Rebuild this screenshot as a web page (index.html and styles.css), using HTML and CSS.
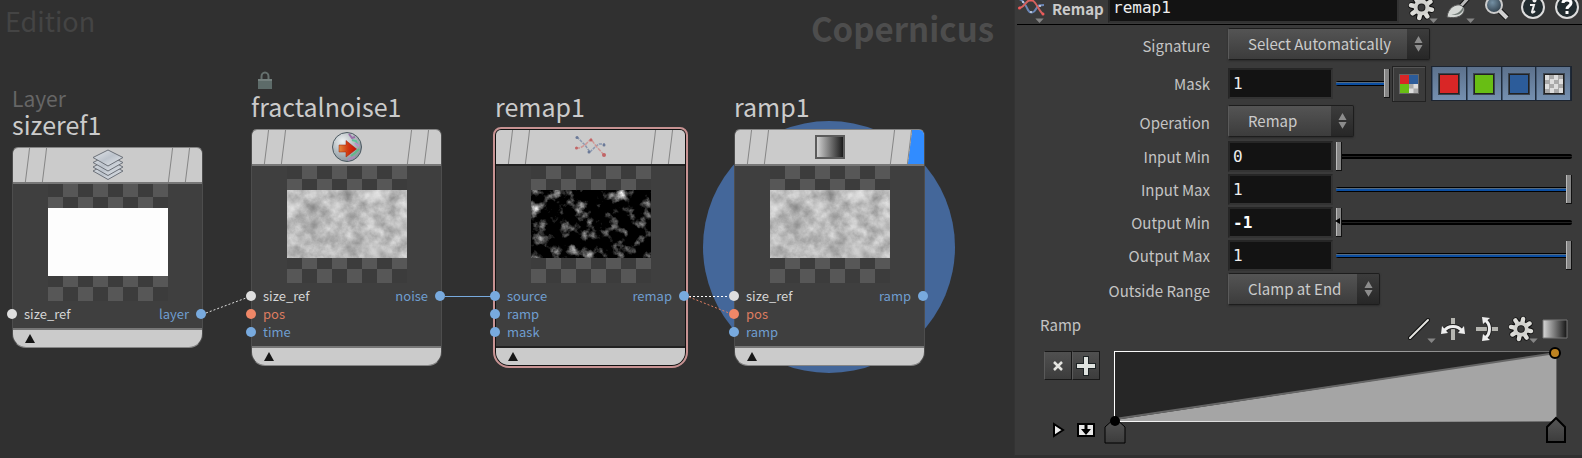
FILE: index.html
```html
<!DOCTYPE html>
<html lang="en">
<head>
<meta charset="utf-8">
<title>Copernicus network</title>
<link rel="stylesheet" href="styles.css">
</head>
<body>
<svg class="defs" width="0" height="0" aria-hidden="true">
  <defs>
    <linearGradient id="steel" x1="0" y1="0" x2="1" y2="1"><stop offset="0" stop-color="#e3e6ea"/><stop offset=".5" stop-color="#bcc3cc"/><stop offset="1" stop-color="#e6e9ed"/></linearGradient>
    <linearGradient id="fade"><stop offset="0" stop-color="#d8d8d8"/><stop offset="1" stop-color="#141414"/></linearGradient>
    <linearGradient id="arrowfill"><stop offset="0" stop-color="#e38a3c"/><stop offset=".5" stop-color="#d03a12"/><stop offset="1" stop-color="#c80a06"/></linearGradient>
    <linearGradient id="tagfill" x1="0" y1="0" x2="0" y2="1"><stop offset="0" stop-color="#565656"/><stop offset="1" stop-color="#3c3c3c"/></linearGradient>
    <radialGradient id="ball" cx=".35" cy=".3" r=".8"><stop offset="0" stop-color="#eef1f2"/><stop offset="1" stop-color="#7d8a92"/></radialGradient>
    <radialGradient id="lens" cx=".4" cy=".35" r=".7"><stop offset="0" stop-color="#7490a4"/><stop offset="1" stop-color="#2c3a45"/></radialGradient>
    <filter id="soft" x="-50%" y="-50%" width="200%" height="200%"><feGaussianBlur stdDeviation="3"/></filter>
    <filter id="cloud" x="0" y="0" width="100%" height="100%" color-interpolation-filters="sRGB">
      <feTurbulence type="fractalNoise" baseFrequency=".09" numOctaves="4" seed="7"/>
      <feColorMatrix values=".4 0 0 0 .53  .4 0 0 0 .53  .4 0 0 0 .53  0 0 0 0 1"/>
    </filter>
    <filter id="sparks" x="0" y="0" width="100%" height="100%" color-interpolation-filters="sRGB">
      <feTurbulence type="fractalNoise" baseFrequency=".09" numOctaves="4" seed="7" result="n"/>
      <feColorMatrix in="n" values="1 0 0 0 0  1 0 0 0 0  1 0 0 0 0  0 0 0 0 1" result="g"/>
      <feGaussianBlur in="SourceGraphic" stdDeviation="2" result="b"/>
      <feComposite in="g" in2="b" operator="arithmetic" k1="0" k2="1.8" k3=".8" k4="-1"/>
      <feColorMatrix values="1 0 0 0 0  0 1 0 0 0  0 0 1 0 0  0 0 0 0 1"/>
    </filter>
    <symbol id="updown" viewBox="0 0 10 18"><path fill="#8c8c8c" d="M5 0 9.500 8H.5zM.5 10h9L5 17.500z"/></symbol>
    <symbol id="drop" viewBox="0 0 10 6"><path fill="#858585" d="M0 .5h10L5 6z"/></symbol>
    <symbol id="gear" viewBox="-12 -12 24 24">
      <g stroke="#111" stroke-width="6" stroke-linecap="round"><path d="M0-9V9M-9 0H9M-6.400-6.400 6.400 6.400M-6.400 6.400 6.400-6.400" transform="rotate(12)"/></g>
      <circle r="8" fill="#111"/>
      <g stroke="#dcdcd8" stroke-width="4" stroke-linecap="round"><path d="M0-9.500V-5M0 5v4.500M-9.500 0H-5M5 0h4.500M-6.700-6.700-4-4M4 4l2.700 2.700M-6.700 6.700-4 4M4-4l2.700-2.700" transform="rotate(12)"/></g>
      <circle r="5" fill="#3a3a3a" stroke="#d2d2ce" stroke-width="4"/>
      <circle r="3" fill="#3a3a3a" stroke="#222" stroke-width="1"/>
    </symbol>
    <symbol id="helix" viewBox="0 0 28 20">
      <g fill="none" stroke-width="2"><path stroke="#6b86b5" d="M1 2c5 1 7 7 9 11s6 3 8-1 3-4 8-4"/><path stroke="#d5625f" d="M1 11c6 0 6-8 12-8 5 0 7 10 12 14"/></g>
      <g fill="#cfd8ea"><circle cx="5" cy="5" r="1"/><circle cx="13" cy="15" r="1"/><circle cx="22" cy="9" r="1"/></g>
      <g fill="#f05a5a"><circle cx="1.500" cy="11" r="1.500"/><circle cx="13" cy="3" r="1.500"/><circle cx="25" cy="17" r="1.500"/></g>
    </symbol>
  </defs>
</svg>

<div class="app">
  <main class="network">
    <p class="edition">Edition</p>
    <h1 class="context">Copernicus</h1>
    <div class="halo"></div>

    <section class="node node-sizeref">
      <p class="kind">Layer</p>
      <h2 class="name">sizeref1</h2>
      <div class="card">
        <header class="cap"><i class="slot"></i>
          <svg width="32" height="32" viewBox="0 0 32 32" fill="url(#steel)" stroke="#6b7078"><path d="M1 22 16 14l15 8-15 8.500z"/><path d="M1 18 16 10l15 8-15 8.500z"/><path d="M1 13.500 16 6l15 7.500-15 8.500z"/><path d="M1 8.500 16 1l15 7.500L16 17z"/></svg>
          <i class="slot"></i></header>
        <div class="preview"><div class="image white"></div></div>
        <div class="ports">
          <ul class="ins"><li class="any">size_ref</li></ul>
          <ul class="outs"><li>layer</li></ul>
        </div>
        <footer class="foot"><svg width="10" height="9" viewBox="0 0 10 9"><path d="M5 0l5 9H0z" fill="#161616"/></svg></footer>
      </div>
    </section>

    <section class="node node-fractal">
      <svg class="lock" width="14" height="18" viewBox="0 0 14 18"><path d="M3.500 9V5.500a3.500 4 0 0 1 7 0V9" fill="none" stroke="#65706e" stroke-width="2"/><path d="M0 8h14v10H0z" fill="#5d6b69"/><path d="M0 8h14v2H0z" fill="#74807e"/></svg>
      <h2 class="name">fractalnoise1</h2>
      <div class="card">
        <header class="cap"><i class="slot"></i>
          <svg width="32" height="32" viewBox="0 0 32 32"><circle cx="16" cy="16" r="14.500" fill="url(#ball)" stroke="#4c5961"/><g stroke-width="2" fill="none"><path d="M18 3l3 4 3-1" stroke="#9a6fa8"/><path d="M21 9l4 1 2 5" stroke="#5fc29a"/><path d="M24 12l4 3" stroke="#c08bc9"/><path d="M20 25l4-3 4-4" stroke="#61b88b"/><path d="M17 29l4-2 3-1" stroke="#a98ab8"/></g><path d="M8 14h7V9.500L25.500 18 15 26v-5H8z" fill="url(#arrowfill)" stroke="#a01c08" stroke-width=".5"/></svg>
          <i class="slot"></i></header>
        <div class="preview"><svg class="image" viewBox="0 0 120 68" preserveAspectRatio="none"><rect width="120" height="68" filter="url(#cloud)"/><g filter="url(#soft)"><g fill="#555" opacity=".6"><circle cx="27" cy="18" r="5"/><circle cx="27" cy="34" r="4"/><circle cx="60" cy="5" r="4"/><circle cx="64" cy="28" r="3"/><circle cx="64" cy="61" r="4"/><circle cx="94" cy="64" r="4"/><circle cx="2" cy="35" r="3"/></g><g fill="#eee" opacity=".7"><circle cx="4" cy="17" r="5"/><circle cx="28" cy="3" r="4"/><circle cx="88" cy="5" r="6"/><circle cx="87" cy="61" r="6"/><circle cx="112" cy="36" r="4"/><circle cx="50" cy="17" r="5"/></g></g></svg></div>
        <div class="ports">
          <ul class="ins"><li class="any">size_ref</li><li class="vec">pos</li><li>time</li></ul>
          <ul class="outs"><li>noise</li></ul>
        </div>
        <footer class="foot"><svg width="10" height="9" viewBox="0 0 10 9"><path d="M5 0l5 9H0z" fill="#161616"/></svg></footer>
      </div>
    </section>

    <section class="node node-remap">
      <h2 class="name">remap1</h2>
      <div class="card selected">
        <header class="cap"><i class="slot"></i>
          <svg width="32" height="24" viewBox="0 0 32 24" fill="none" stroke-width="1.500" opacity=".8"><path d="M2 2l8 8 5 7 6-6 3-2h6" stroke="#7b8ba9" stroke-dasharray="3 1"/><path d="M1 13h4l5-3 6-6 5 7 8 9" stroke="#d08a88" stroke-dasharray="4 1"/><g fill="#bf4a4c" stroke="none"><circle cx="1.500" cy="13" r="1.500"/><circle cx="16" cy="5" r="1.500"/><circle cx="29" cy="20" r="2"/></g><g fill="#53658a" stroke="none"><circle cx="2" cy="2.500" r="1.500"/><circle cx="14" cy="17" r="1.500"/><circle cx="29" cy="10" r="1.500"/></g></svg>
          <i class="slot"></i></header>
        <div class="preview"><svg class="image" viewBox="0 0 120 68" preserveAspectRatio="none"><g filter="url(#sparks)"><rect width="120" height="68" fill="#000"/><g fill="#bbb"><circle cx="4" cy="17" r="6"/><circle cx="28" cy="2" r="5"/><circle cx="50" cy="17" r="6"/><circle cx="89" cy="5" r="6"/><circle cx="13" cy="32" r="5"/><circle cx="12" cy="48" r="5"/><circle cx="34" cy="36" r="4"/><circle cx="53" cy="46" r="5"/><circle cx="73" cy="45" r="5"/><circle cx="111" cy="36" r="6"/><circle cx="87" cy="61" r="7"/><circle cx="5" cy="65" r="5"/><circle cx="56" cy="65" r="5"/><circle cx="102" cy="22" r="4"/><circle cx="42" cy="6" r="3"/><circle cx="4" cy="3" r="3"/><circle cx="17" cy="9" r="3"/><circle cx="34" cy="46" r="3"/><circle cx="42" cy="60" r="4"/><circle cx="25" cy="63" r="4"/><circle cx="60" cy="32" r="3"/><circle cx="70" cy="61" r="3"/></g></g></svg></div>
        <div class="ports">
          <ul class="ins"><li>source</li><li>ramp</li><li>mask</li></ul>
          <ul class="outs"><li>remap</li></ul>
        </div>
        <footer class="foot"><svg width="10" height="9" viewBox="0 0 10 9"><path d="M5 0l5 9H0z" fill="#161616"/></svg></footer>
      </div>
    </section>

    <section class="node node-ramp">
      <h2 class="name">ramp1</h2>
      <div class="card">
        <header class="cap display"><i class="slot"></i>
          <svg width="30" height="24" viewBox="0 0 30 24"><path d="M1 1h28v22H1z" fill="url(#fade)" stroke="#5c5c5c" stroke-width="2"/></svg>
          <i class="slot"></i></header>
        <div class="preview"><svg class="image" viewBox="0 0 120 68" preserveAspectRatio="none"><rect width="120" height="68" filter="url(#cloud)"/><g filter="url(#soft)"><g fill="#555" opacity=".6"><circle cx="27" cy="18" r="5"/><circle cx="27" cy="34" r="4"/><circle cx="60" cy="5" r="4"/><circle cx="64" cy="28" r="3"/><circle cx="64" cy="61" r="4"/><circle cx="94" cy="64" r="4"/><circle cx="2" cy="35" r="3"/></g><g fill="#eee" opacity=".7"><circle cx="4" cy="17" r="5"/><circle cx="28" cy="3" r="4"/><circle cx="88" cy="5" r="6"/><circle cx="87" cy="61" r="6"/><circle cx="112" cy="36" r="4"/><circle cx="50" cy="17" r="5"/></g></g></svg></div>
        <div class="ports">
          <ul class="ins"><li class="any">size_ref</li><li class="vec">pos</li><li>ramp</li></ul>
          <ul class="outs"><li>ramp</li></ul>
        </div>
        <footer class="foot"><svg width="10" height="9" viewBox="0 0 10 9"><path d="M5 0l5 9H0z" fill="#161616"/></svg></footer>
      </div>
    </section>

    <svg class="wires" width="1010" height="440" viewBox="0 0 1010 440" fill="none" aria-hidden="true">
      <path d="M206 313l40-15" stroke="#ddd" stroke-dasharray="2 2"/>
      <path d="M445 296.500h46" stroke="#78aade"/>
      <path d="M689 296.500h40" stroke="#fff" stroke-dasharray="2 2"/>
      <path d="M689 297l40 16" stroke="#e07f62" stroke-dasharray="2 2"/>
    </svg>
  </main>

  <aside class="inspector">
    <header class="bar">
      <button class="tool type" aria-label="Node type"><svg width="28" height="20"><use href="#helix"/></svg><svg class="more" width="9" height="5"><use href="#drop"/></svg></button>
      <label class="bar-label" for="node-name">Remap</label>
      <input class="field bar-field" id="node-name" value="remap1">
      <button class="tool" aria-label="Settings"><svg width="27" height="27"><use href="#gear"/></svg><svg class="more" width="9" height="5"><use href="#drop"/></svg></button>
      <button class="tool" aria-label="Brush"><svg width="26" height="26" viewBox="0 0 26 26"><path d="M15 12 25 1" stroke="#111" stroke-width="5"/><path d="M15 12 25 1" stroke="#bbb" stroke-width="3"/><path d="M1 23c1-9 8-13 13-12 6 2 5 8 0 11-4 2-8 2-13 1z" fill="#d5d8d5" stroke="#555"/><path d="M5 20c4 1 9-1 12-7 2 6-7 10-12 7z" fill="#717a76"/></svg><svg class="more" width="9" height="5"><use href="#drop"/></svg></button>
      <button class="tool" aria-label="Search"><svg width="26" height="26" viewBox="0 0 26 26"><path d="M15 15l9 9" stroke="#111" stroke-width="6"/><path d="M15 15l9 9" stroke="#d0d0d0" stroke-width="4"/><circle cx="11" cy="11" r="8" fill="url(#lens)" stroke="#ccc" stroke-width="2"/></svg></button>
      <button class="tool" aria-label="Information"><svg width="26" height="26" viewBox="0 0 26 26"><circle cx="13" cy="13" r="11" fill="#222c30" stroke="#ddd" stroke-width="2"/><path d="M10 11h4l-2 7c0 1 1 1 3-1" fill="none" stroke="#eee" stroke-width="2"/><circle cx="14.500" cy="6.500" r="2" fill="#eee"/></svg></button>
      <button class="tool" aria-label="Help"><svg width="26" height="26" viewBox="0 0 26 26"><circle cx="13" cy="13" r="11" fill="#222c30" stroke="#ddd" stroke-width="2"/><path d="M9 9c0-4 8-4 8 0 0 3-4 3-4 6" fill="none" stroke="#fff" stroke-width="3"/><path d="M11.500 17h3v3h-3z" fill="#fff"/></svg></button>
    </header>

    <form class="params">
      <label for="signature">Signature</label>
      <div class="row"><span class="pick"><select id="signature"><option>Select Automatically</option></select><svg width="9" height="18"><use href="#updown"/></svg></span></div>

      <label for="mask">Mask</label>
      <div class="row tall">
        <input class="field value" id="mask" value="1">
        <input class="slider short full" type="range" min="0" max="1" value="1" step="0.01" aria-label="Mask amount">
        <button type="button" class="quad" aria-label="All channels"><svg width="18" height="18" viewBox="0 0 18 18"><path fill="#d92626" d="M0 0h9v9H0z"/><path fill="#2c5c9a" d="M9 0h9v9H9z"/><path fill="#68be14" d="M0 9h9v9H0z"/><path fill="#ddd" d="M9 9h9v9H9z"/><path fill="#aaa" d="M9 9h4.500v4.500H9zM13.500 13.500H18V18h-4.500z"/></svg></button>
        <span class="channels">
          <button type="button" aria-label="Red"><i class="chip red"></i></button><button type="button" aria-label="Green"><i class="chip green"></i></button><button type="button" aria-label="Blue"><i class="chip blue"></i></button><button type="button" aria-label="Alpha"><i class="chip alpha"></i></button>
        </span>
      </div>

      <label for="operation">Operation</label>
      <div class="row"><span class="pick"><select id="operation"><option>Remap</option></select><svg width="9" height="18"><use href="#updown"/></svg></span></div>

      <label for="inmin">Input Min</label>
      <div class="row"><input class="field value" id="inmin" value="0"><input class="slider" type="range" value="0" aria-label="Input Min slider"></div>
      <label for="inmax">Input Max</label>
      <div class="row"><input class="field value" id="inmax" value="1"><input class="slider full" type="range" value="100" aria-label="Input Max slider"></div>
      <label for="outmin">Output Min</label>
      <div class="row"><input class="field value changed" id="outmin" value="-1"><span class="below"><input class="slider" type="range" value="0" aria-label="Output Min slider"></span></div>
      <label for="outmax">Output Max</label>
      <div class="row"><input class="field value" id="outmax" value="1"><input class="slider full" type="range" value="100" aria-label="Output Max slider"></div>

      <label for="outside">Outside Range</label>
      <div class="row"><span class="pick"><select id="outside"><option>Clamp at End</option></select><svg width="9" height="18"><use href="#updown"/></svg></span></div>
    </form>

    <section class="ramp">
      <div class="ramp-head">
        <h3>Ramp</h3>
        <button class="tool" aria-label="Interpolation"><svg width="24" height="24" viewBox="0 0 24 24" stroke-linecap="round"><path d="M3 21 21 3" stroke="#111" stroke-width="4"/><path d="M3 21 21 3" stroke="#e6e6e2" stroke-width="2"/></svg><svg class="more" width="9" height="5"><use href="#drop"/></svg></button>
        <button class="tool" aria-label="Flip horizontally"><svg width="26" height="26" viewBox="0 0 26 26"><path d="M13 2v22" stroke="#b5b5b0" stroke-width="4"/><path d="M4 15c4-6 14-6 18 0" fill="none" stroke="#222" stroke-width="5"/><path d="M4 15c4-6 14-6 18 0" fill="none" stroke="#eee" stroke-width="3"/><path d="M1 18l1-8 6 7zM25 18l-1-8-6 7z" fill="#eee"/></svg></button>
        <button class="tool" aria-label="Flip vertically"><svg width="26" height="26" viewBox="0 0 26 26"><path d="M2 13h22" stroke="#b5b5b0" stroke-width="4"/><path d="M11 4c6 4 6 14 0 18" fill="none" stroke="#222" stroke-width="5"/><path d="M11 4c6 4 6 14 0 18" fill="none" stroke="#eee" stroke-width="3"/><path d="M8 1l8 1-7 6zM8 25l8-1-7-6z" fill="#eee"/></svg></button>
        <button class="tool" aria-label="Ramp options"><svg width="26" height="26"><use href="#gear"/></svg><svg class="more" width="9" height="5"><use href="#drop"/></svg></button>
        <button class="tool" aria-label="Color ramp"><svg width="26" height="20" viewBox="0 0 26 20"><path d="M1 1h24v18H1z" fill="url(#fade)" stroke="#777"/></svg></button>
      </div>
      <div class="ramp-body">
        <div class="ramp-tools">
          <div class="pair">
            <button aria-label="Remove point"><svg width="10" height="10" viewBox="0 0 10 10"><path d="M1 1l8 8M9 1 1 9" stroke="#e4e4e0" stroke-width="2.500"/></svg></button><button aria-label="Add point"><svg width="20" height="20" viewBox="0 0 20 20"><path d="M10 0v20M0 10h20" stroke="#1c2224" stroke-width="6"/><path d="M10 1v18M1 10h18" stroke="#dfe2df" stroke-width="4"/></svg></button>
          </div>
          <div class="pair plain">
            <button aria-label="Play"><svg width="13" height="16" viewBox="0 0 13 16"><path d="M2 2l9 6-9 6z" fill="#ececec" stroke="#000" stroke-width="2"/></svg></button><button aria-label="Dock"><svg width="18" height="14" viewBox="0 0 18 14"><path d="M1 1h16v12H1z" fill="#e8e8e8" stroke="#000" stroke-width="2"/><path d="M7.500 1h3v5H14l-5 6-5-6h3.500z" fill="#000"/></svg></button>
          </div>
        </div>
        <div class="curve">
          <svg class="plot" viewBox="0 0 442 71" preserveAspectRatio="none"><path d="M0 70 442 1v70H0z" fill="#a5a5a5"/><path d="M0 69 442 1" stroke="#666" stroke-width="2"/></svg>
          <i class="knot start"></i><i class="knot end"></i>
          <button class="tag start" aria-label="First point"><svg width="22" height="28" viewBox="0 0 22 28"><path d="M11 2l10 9v16H1V11z" fill="url(#tagfill)" stroke="#000"/></svg></button>
          <button class="tag end" aria-label="Last point"><svg width="22" height="28" viewBox="0 0 22 28"><path d="M11 2l9 9v15H2V11z" fill="url(#tagfill)" stroke="#000" stroke-width="2"/></svg></button>
        </div>
      </div>
    </section>
  </aside>
</div>
</body>
</html>
```

FILE: styles.css
```css
* { box-sizing: border-box; }
body { margin: 0; background: #303030; font-family: "Noto Sans CJK SC", "Noto Sans", sans-serif; font-size: 15px; color: #cbcbcb; }
h1, h2, h3, p, ul { margin: 0; padding: 0; font-weight: 400; list-style: none; }
button { padding: 0; border: 0; background: none; font: inherit; color: inherit; }
svg { display: block; flex: none; }
.defs { position: absolute; }

.app { display: grid; grid-template-columns: minmax(0, 1fr) 568px; min-height: 100vh; }

/* network canvas */
.network { position: relative; overflow: hidden; background: #303030; }
.edition { position: absolute; left: 5px; top: 1px; font-size: 27px; line-height: 40px; color: #444; }
.context { position: absolute; right: 20px; top: 4px; font-size: 33px; line-height: 48px; font-weight: 700; color: #4d4d4d; }
.halo { position: absolute; left: 703px; top: 121px; width: 252px; height: 252px; border-radius: 50%; background: #44679a; }
.wires { position: absolute; left: 0; top: 0; }

.node { position: absolute; width: 191px; }
.node-sizeref { left: 12px; top: 87px; }
.node-fractal { left: 251px; top: 71px; }
.node-remap { left: 495px; top: 92px; }
.node-ramp { left: 734px; top: 92px; }
.kind { font-size: 21px; line-height: 23px; color: #666; }
.lock { margin: 0 0 3px 7px; }
.name { font-size: 25px; line-height: 28px; padding-bottom: 9px; color: #cbcbcb; }
.card { border: 1px solid #858585; border-color: #858585 #4d4d4d; border-radius: 6px 6px 14px 14px; background: #3f3f3f; }
.selected { border-color: #111; outline: 2px solid #c79292; }
.cap { display: flex; justify-content: space-between; align-items: center; height: 36px; padding: 0 14px; overflow: hidden; background: #cbcbcb; border-bottom: 2px solid #777; border-radius: 5px 5px 0 0; }
.selected .cap { border-color: #222; }
.slot { width: 18px; height: 100%; border: solid #858585; border-width: 0 1px; transform: skewX(-7deg); }
.display .slot:last-child { box-shadow: 18px 0 #318cff; }
.preview { width: 120px; height: 117px; margin: 0 auto; padding-top: 24px; background: repeating-conic-gradient(#575757 0 25%, #3c3c3c 0 50%) 0 -2px / 30px 30px; }
.image { display: block; width: 120px; height: 68px; }
.white { background: #fdfdfd; }
.ports { display: flex; justify-content: space-between; margin: 4px -6px 5px; font-size: 13px; line-height: 18px; color: #6f9ed0; }
.ports li { display: flex; align-items: center; gap: 7px; }
.ports li::before { content: ""; width: 10px; height: 10px; border-radius: 50%; background: #78aade; }
.outs li { flex-direction: row-reverse; }
.outs { padding-right: 2px; }
.ports .any { color: #d6d6d6; }
.ports .any::before { background: #dfdfdf; }
.ports .vec { color: #dc7c60; }
.ports .vec::before { background: #ef8767; }
.ports { position: relative; z-index: 1; }
.foot { display: flex; align-items: center; height: 19px; padding-left: 12px; background: #cbcbcb; border-top: 2px solid #777; border-radius: 0 0 13px 13px; }
.selected .foot { border-color: #222; }

/* parameter panel */
.inspector { background: #3a3a3a; border-left: 1px solid #333; border-bottom: 3px solid #303030; }
.bar { display: flex; align-items: flex-end; height: 25px; margin-left: 2px; padding: 0 0 1px 1px; border-bottom: 1px solid #000; overflow: hidden; }
.tool { position: relative; display: flex; justify-content: center; align-items: center; width: 34px; height: 26px; flex: none; }
.more { position: absolute; right: 0; bottom: -1px; }
.bar .tool { width: 37px; height: 32px; }
.bar .tool:last-child { width: 31px; }
.bar .type { width: 28px; margin-right: 6px; }
.bar .more { bottom: 0; right: 2px; }
.bar-label { width: 56px; font-weight: 700; line-height: 28px; }
.bar-field { flex: 1; min-width: 0; height: 32px; margin-right: 4px; }
.field { border: 2px solid #2c2c2c; border-color: #262626 #333 #333 #262626; background: #131313; color: #eee; font-family: "DejaVu Sans Mono", monospace; font-size: 16px; padding: 0 3px; }

.params { display: grid; grid-template-columns: 195px minmax(0, 1fr); column-gap: 18px; row-gap: 2px; padding: 3px 10px 0 0; }
.params label { align-self: center; text-align: right; line-height: 31px; color: #c4c4c4; }
.row { display: flex; align-items: center; min-height: 31px; }
.tall { min-height: 39px; }
.value { width: 105px; height: 31px; flex: none; }
.changed { font-weight: 700; color: #fff; }
.pick { position: relative; display: inline-flex; margin-bottom: 2px; }
.pick select { appearance: none; height: 32px; min-width: 126px; margin: 0; padding: 0 37px 2px 19px; border: 1px solid #1d1d1d; border-left-color: #5a5a5a; border-radius: 2px; background: linear-gradient(#3c3c3c, #272727) right / 22px 100% no-repeat, linear-gradient(#545454, #3c3c3c); color: #cbcbcb; font: inherit; box-shadow: 0 1px 2px #2a2a2a; }
.pick svg { position: absolute; right: 7px; top: 7px; pointer-events: none; }

.slider { appearance: none; flex: 1; min-width: 0; height: 30px; margin: 0 0 0 3px; background: none; }
.slider::-webkit-slider-runnable-track { height: 5px; border-radius: 2px; background: linear-gradient(#000 2px, #222 2px, #222 3px, #000 3px); }
.full::-webkit-slider-runnable-track { background: linear-gradient(#000 1px, #566b80 1px, #566b80 2px, #0b4ea2 2px, #0b4ea2 4px, #000 4px); }
.slider::-webkit-slider-thumb { appearance: none; width: 6px; height: 29px; margin-top: -12px; border: 1px solid #111; border-width: 0 1px 1px 0; background: linear-gradient(90deg, #bbb 1px, #858585 1px); }
.short { flex: none; width: 54px; }
.below { position: relative; display: flex; flex: 1; }
.below::after { content: ""; position: absolute; left: 2px; top: 10px; border: solid transparent; border-width: 3px 5px 3px 0; border-right-color: #000; }

.quad { display: grid; place-items: center; width: 34px; height: 36px; margin: 0 5px 0 2px; border: 1px solid #222; background: #3b3b3b; box-shadow: inset 1px 1px #555; }
.quad svg { outline: 1px solid #666; }
.channels { display: flex; flex: 1; height: 35px; border: 1px solid #1c2430; }
.channels button { display: grid; place-items: center; flex: 1; background: linear-gradient(#5c718c, #7590b0); border-right: 1px solid #1f2b3a; border-left: 1px solid #42566f; }
.chip { width: 20px; height: 20px; border: 1px solid #222; outline: 1px solid #3a4450; }
.red { background: #d92626; }
.green { background: #68be14; }
.blue { background: #2c5c9a; }
.alpha { background: repeating-conic-gradient(#a9a9a9 0 25%, #ddd 0 50%) 0 0 / 9px 9px; }

/* ramp editor */
.ramp { padding: 9px 10px 0 25px; }
.ramp-head { display: flex; align-items: center; height: 26px; }
.ramp-head h3 { flex: 1; font-size: 15px; line-height: 26px; padding-bottom: 9px; color: #c4c4c4; }
.ramp-body { display: flex; gap: 14px; padding: 9px 15px 0 4px; }
.ramp-tools { display: flex; flex-direction: column; justify-content: space-between; width: 56px; height: 88px; }
.pair { display: flex; }
.pair button { display: grid; place-items: center; width: 28px; height: 29px; border: 1px solid #181818; border-left-color: #5a5a5a; background: linear-gradient(#505050, #3c3c3c); }
.plain button { height: 18px; border: 0; background: none; }
.curve { position: relative; flex: 1; height: 71px; }
.plot { width: 100%; height: 71px; background: #262626; border: 1px solid #777; border-left-color: #fff; border-image: linear-gradient(90deg, #fff, #666) 1; }
.knot { position: absolute; width: 10px; height: 10px; border-radius: 50%; background: #000; z-index: 1; }
.knot.start { left: -4px; bottom: -4px; }
.knot.end { right: -4px; top: -4px; background: #bd8220; border: 2px solid #000; width: 12px; height: 12px; }
.tag { position: absolute; top: 65px; }
.tag.start { left: -10px; }
.tag.end { right: -10px; }
```
